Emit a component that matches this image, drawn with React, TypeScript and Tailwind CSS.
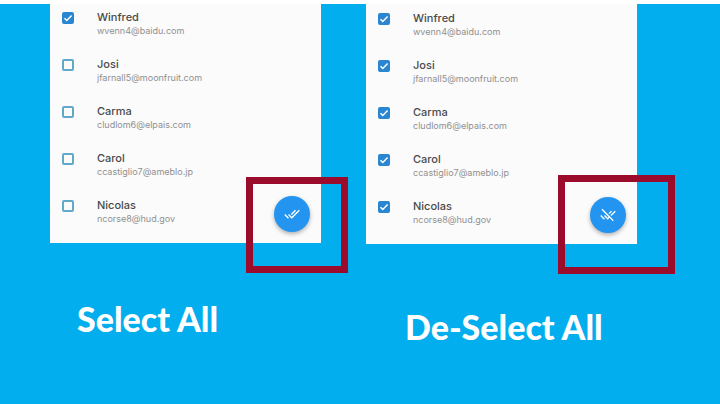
import { MdDoneAll, MdRemoveDone } from "react-icons/md";

type Person = { name: string; email: string };

const people: Person[] = [
  { name: "Winfred", email: "wvenn4@baidu.com" },
  { name: "Josi", email: "jfarnall5@moonfruit.com" },
  { name: "Carma", email: "cludlom6@elpais.com" },
  { name: "Carol", email: "ccastiglio7@ameblo.jp" },
  { name: "Nicolas", email: "ncorse8@hud.gov" },
];

function PersonRow({ person, checked }: { person: Person; checked: boolean }) {
  return (
    <li className="h-[47px] last:h-[46px]">
      <label className="flex items-start">
        <span className="mt-[3px] grid size-3 shrink-0">
          <input
            type="checkbox"
            defaultChecked={checked}
            className="peer col-start-1 row-start-1 size-3 appearance-none rounded-[2px] border-2 border-[#62a9c9] checked:border-[#2a86d0] checked:bg-[#2a86d0]"
          />
          <svg
            viewBox="0 0 12 12"
            className="pointer-events-none col-start-1 row-start-1 hidden size-3 peer-checked:block"
            fill="none"
            stroke="#fff"
            strokeWidth="1.5"
          >
            <path d="M2.5 6.2 4.8 8.5 9.6 3.6" />
          </svg>
        </span>
        <span className="ml-[23px] flex flex-col">
          <span className="text-[11px] leading-4 font-medium text-[#4a4a4a]">{person.name}</span>
          <span className="text-[9px] leading-3 text-[#909090]">{person.email}</span>
        </span>
      </label>
    </li>
  );
}

export default function App() {
  return (
    <main className="grid min-h-screen grid-cols-2 gap-[45px] border-t-4 border-white bg-[#02aeee] pr-[83px] pl-[50px] font-['Inter','Liberation_Sans',sans-serif]">
      <section>
        <div className="relative bg-[#fbfbfb] pt-[5px] pl-3">
          <ul>
            {people.map((person, i) => (
              <PersonRow key={person.name} person={person} checked={i === 0} />
            ))}
          </ul>
          <button
            type="button"
            aria-label="Select all"
            className="absolute right-[11px] bottom-[11px] flex size-9 items-center justify-center rounded-full bg-[#2394ef] text-white shadow-[0_2px_4px_rgba(0,0,0,0.3)]"
          >
            <MdDoneAll className="size-4" />
          </button>
          <div className="pointer-events-none absolute -right-[27px] -bottom-[30px] h-24 w-[102px] border-[7px] border-[#9b0c2c]" />
        </div>
        <h2 className="mt-[60px] ml-[27px] font-['Lato',sans-serif] text-[34px] leading-8 font-black whitespace-nowrap text-white">
          Select All
        </h2>
      </section>
      <section>
        <div className="relative bg-[#fbfbfb] pt-[6px] pl-3">
          <ul>
            {people.map((person) => (
              <PersonRow key={person.name} person={person} checked />
            ))}
          </ul>
          <button
            type="button"
            aria-label="De-select all"
            className="absolute right-[11px] bottom-[11px] flex size-9 items-center justify-center rounded-full bg-[#2394ef] text-white shadow-[0_2px_4px_rgba(0,0,0,0.3)]"
          >
            <MdRemoveDone className="size-4" />
          </button>
          <div className="pointer-events-none absolute -right-[38px] -bottom-[30px] h-[99px] w-[117px] border-[7px] border-[#9b0c2c]" />
        </div>
        <h2 className="mt-[67px] ml-[39px] font-['Lato',sans-serif] text-[34px] leading-8 font-black whitespace-nowrap text-white">
          De-Select All
        </h2>
      </section>
    </main>
  );
}
